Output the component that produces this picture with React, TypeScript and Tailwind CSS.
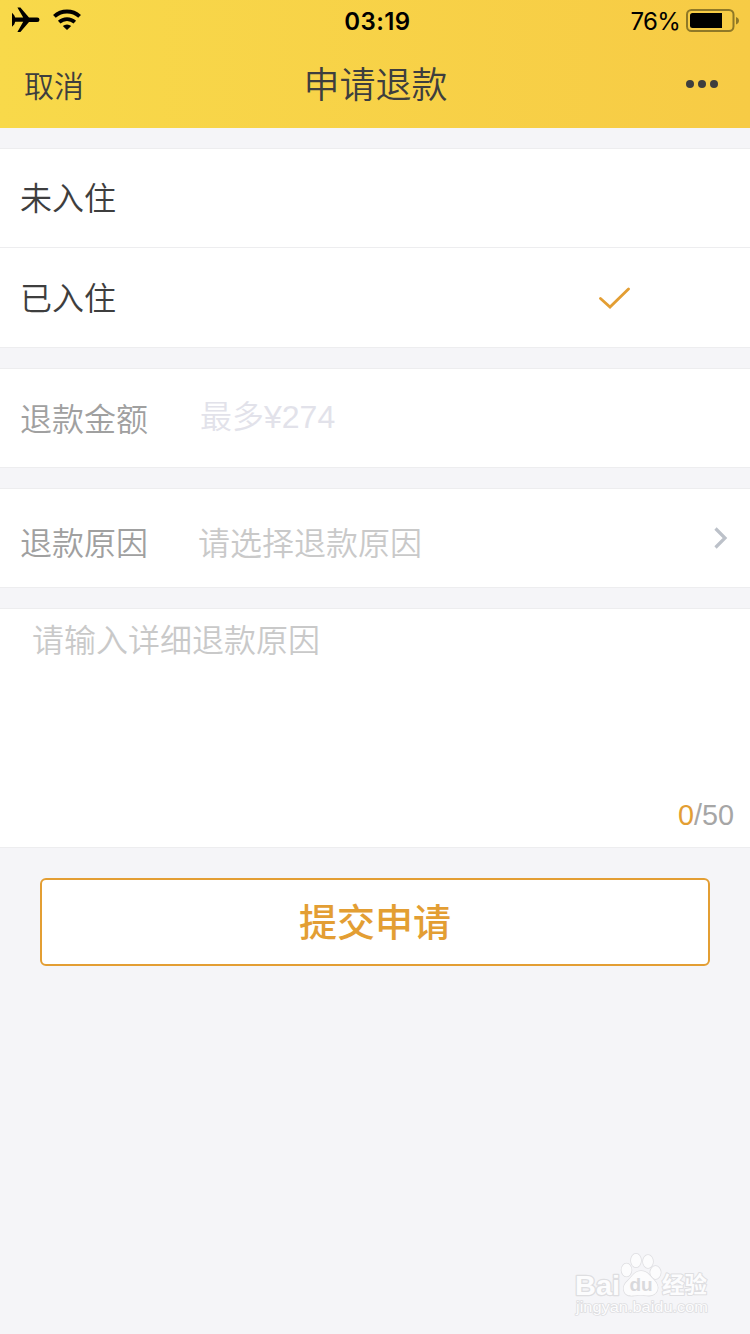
import React from 'react';

const cjk = "font-['Noto_Sans_CJK_SC',sans-serif]";

function StatusBar() {
  return (
    <div className="grid h-10 grid-cols-3 items-center text-black">
      <div className="flex items-center pl-3">
        <svg className="h-[26px] w-[28px]" viewBox="0 0 28 26">
          <path
            fill="#000"
            d="M0 5.800 2.200 8.200 3.200 10.600h8L5.400.6h3L17 10.500h8.200a2.200 2.200 0 0 1 0 4.600H17L8.400 25h-3l5.800-10.200h-8L2.200 17.400 0 19.800z"
          />
        </svg>
        <svg className="ml-[13px] h-[22px] w-[28px]" viewBox="0 0 28 22">
          <path fill="none" stroke="#000" strokeWidth="4" d="M1.400 7.400a18.500 18.500 0 0 1 25.200 0" />
          <path fill="none" stroke="#000" strokeWidth="3.700" d="M6.200 13.200a11.500 11.500 0 0 1 15.600 0" />
          <path fill="#000" d="M9.800 17a6.400 6.400 0 0 1 8.400 0L14 21z" />
        </svg>
      </div>
      <div className="pl-[5px] pt-[3px] text-center font-['Inter',sans-serif] text-[24px] font-semibold leading-[30px] tracking-[0.400px]">
        03:19
      </div>
      <div className="flex items-center justify-end pr-[10px]">
        <span className="pt-[3px] font-['Inter',sans-serif] text-[24px] leading-[30px] tracking-[-0.700px]">76%</span>
        <svg className="ml-1.5 h-6 w-[54px]" viewBox="0 0 54 24">
          <rect x="1" y="2" width="46.500" height="21" rx="4.500" fill="none" stroke="#8f7827" strokeWidth="2" />
          <path fill="#000" d="M6.500 5H36v15H6.500A2.500 2.500 0 0 1 4 17.500v-10A2.500 2.500 0 0 1 6.500 5z" />
          <path fill="#8f7827" d="M50 9c4 1.500 4 6 0 7.500z" />
        </svg>
      </div>
    </div>
  );
}

function NavBar() {
  return (
    <div className="grid h-[88px] grid-cols-3 items-center text-[#3e3e3e]">
      <span className="pl-6 text-[30px] font-[350] leading-10">取消</span>
      <h1 className="pb-1 pl-px text-center text-[36px] font-[350] leading-[48px]">申请退款</h1>
      <div className="flex justify-end gap-1 pr-8">
        <i className="size-2 rounded-full bg-[#3e3e3e]" />
        <i className="size-2 rounded-full bg-[#3e3e3e]" />
        <i className="size-2 rounded-full bg-[#3e3e3e]" />
      </div>
    </div>
  );
}

function Watermark() {
  return (
    <svg className="h-[70px] w-[142px]" viewBox="0 0 142 70">
      <g fill="#fcfcfd" stroke="#dedee1" strokeWidth="1.500" paintOrder="stroke" strokeLinejoin="round">
        <text x="4" y="45" fontSize="27" fontWeight="700" fontFamily="Liberation Sans, sans-serif" textLength="45" lengthAdjust="spacingAndGlyphs" strokeWidth="2.500">
          Bai
        </text>
        <ellipse cx="55.500" cy="20" rx="5" ry="6.500" />
        <ellipse cx="65" cy="10.500" rx="5" ry="6.800" />
        <ellipse cx="77" cy="11.500" rx="5" ry="6.500" />
        <ellipse cx="84.500" cy="22.500" rx="5.200" ry="6.500" />
        <path d="M70 21c6 0 8 4 12 8s6 8 4 12-6 5-10 4.500-9-.5-13 0-9 0-10-5 1-7 5-11 6-8.500 12-8.500z" />
        <text x="91" y="42.500" fontSize="22.500" fontWeight="700" fontFamily="Noto Sans CJK SC, sans-serif" strokeWidth="2">
          经验
        </text>
        <text x="5" y="62" fontSize="14" fontFamily="Liberation Sans, sans-serif" textLength="132" lengthAdjust="spacingAndGlyphs">
          jingyan.baidu.com
        </text>
      </g>
      <text x="58.500" y="41" fontSize="19" fontWeight="700" fill="#d9d9dc" fontFamily="Liberation Sans, sans-serif">
        du
      </text>
    </svg>
  );
}

export default function App() {
  return (
    <div className={`flex h-[1334px] w-[750px] flex-col overflow-hidden bg-[#f5f5f8] ${cjk}`}>
      <header className="bg-linear-to-r from-[#f8d94a] to-[#f7cb45]">
        <StatusBar />
        <NavBar />
      </header>

      <section className="mt-5 border-y border-[#ededef] bg-white text-[32px] font-[350] text-[#3e3e3e]">
        <div className="flex h-[99px] items-center border-b border-[#ededef] pb-1 pl-5 leading-[48px]">未入住</div>
        <div className="flex h-[99px] items-center justify-between pl-5 pr-[120px]">
          <span className="pb-[3px] leading-[48px]">已入住</span>
          <svg className="h-6 w-8" viewBox="0 0 32 24" fill="none" stroke="#e39e33" strokeWidth="2.800" strokeLinecap="round" strokeLinejoin="miter">
            <path d="M2.500 12.500 12 21 30.500 3" />
          </svg>
        </div>
      </section>

      <section className="mt-5 flex h-[100px] items-center border-y border-[#ededef] bg-white pl-5 text-[32px] font-[350]">
        <span className="w-[180px] pb-[2px] leading-[48px] text-[#a0a0a0]">退款金额</span>
        <span className="pb-[5px] leading-[48px] text-[#e2e2ea]">
          最多<span className="font-['Liberation_Sans',sans-serif]">¥274</span>
        </span>
      </section>

      <section className="mt-5 flex h-[100px] items-center border-y border-[#ededef] bg-white pl-5 pr-[22px] text-[32px] font-[350]">
        <span className="w-[178px] pt-[6px] leading-[48px] text-[#a0a0a0]">退款原因</span>
        <span className="grow pt-[6px] leading-[48px] text-[#c9c9c9]">请选择退款原因</span>
        <svg className="h-6 w-[14px]" viewBox="0 0 14 24" fill="none" stroke="#bcc1c9" strokeWidth="3.200">
          <path d="M1.500 2.500 11 12 1.500 21.500" />
        </svg>
      </section>

      <section className="mt-5 flex h-60 flex-col justify-between border-y border-[#ededef] bg-white">
        <p className="pl-8 pt-[5px] text-[32px] font-[350] leading-[48px] text-[#c9c9c9]">请输入详细退款原因</p>
        <p className="pb-4 pr-4 text-right font-['Liberation_Sans',sans-serif] text-[28.800px] leading-8 text-[#a6a6a6]">
          <span className="text-[#e39e33]">0</span>/50
        </p>
      </section>

      <button className="mx-10 mt-[30px] flex h-[88px] items-center justify-center rounded-md border-2 border-[#e39e33] bg-white pb-1 text-[38px] font-medium leading-[56px] text-[#e39e33]">
        提交申请
      </button>

      <footer className="mt-auto flex justify-end pb-[14px] pr-[37px]">
        <Watermark />
      </footer>
    </div>
  );
}
